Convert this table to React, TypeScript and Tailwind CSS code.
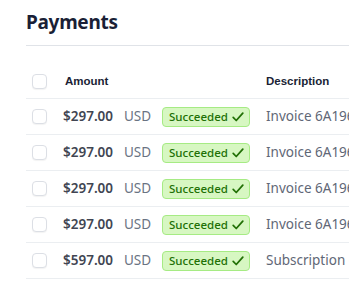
import React from "react";

const rows = [
  { amount: "$297.00", desc: "Invoice 6A196B2-0005" },
  { amount: "$297.00", desc: "Invoice 6A196B2-0004" },
  { amount: "$297.00", desc: "Invoice 6A196B2-0003" },
  { amount: "$297.00", desc: "Invoice 6A196B2-0002" },
  { amount: "$597.00", desc: "Subscription creation" },
];

const Check = () => (
  <svg width="14" height="14" viewBox="0 0 16 16" fill="none" className="ml-[3px]">
    <path d="M2.5 8.5l3.5 3.5 7.5-8.5" stroke="#217005" strokeWidth="2" strokeLinecap="round" strokeLinejoin="round" />
  </svg>
);

const Box = () => (
  <div className="w-[15px] h-[15px] rounded-[4px] border border-[#dcdfe5] bg-white shadow-[0_1px_1px_rgba(0,0,0,0.05)]" />
);

export default function App() {
  return (
    <div
      className="w-[349px] h-[290px] overflow-hidden bg-white pl-[26px]"
      style={{ fontFamily: '"Noto Sans", "Open Sans", sans-serif' }}
    >
      <div className="w-[400px]">
        <h1 className="pt-[9px] pb-[10px] text-[19px] leading-[26px] font-bold tracking-[-0.3px] text-[#1a1f36] border-b border-[#e0e3e8]">
          Payments
        </h1>
        <div
          className="mt-[19px] h-[34px] flex items-center border-b border-[#ebeef1] text-[11.5px] font-bold text-[#1a1f36]"
          style={{ fontFamily: '"Liberation Sans", Arial, sans-serif' }}
        >
          <div className="w-[39px] pl-[6px]">
            <Box />
          </div>
          <div className="w-[201px]">Amount</div>
          <div>Description</div>
        </div>
        {rows.map((r, i) => (
          <div key={i} className="h-[36px] flex items-center border-b border-[#ebeef1] text-[13.5px]">
            <div className="w-[37px] pl-[6px]">
              <Box />
            </div>
            <div className="w-[61px] font-semibold text-[#414552]">{r.amount}</div>
            <div className="w-[38px] text-[#6a7383]">USD</div>
            <div className="w-[104px]">
              <span className="inline-flex items-center h-[20px] pl-[6px] pr-[4px] rounded-[4px] bg-[#d7f7c2] border border-[#a6eb84] text-[11.5px] font-medium text-[#217005]">
                Succeeded
                <Check />
              </span>
            </div>
            <div className="whitespace-nowrap text-[#5f6776]">{r.desc}</div>
          </div>
        ))}
      </div>
    </div>
  );
}
